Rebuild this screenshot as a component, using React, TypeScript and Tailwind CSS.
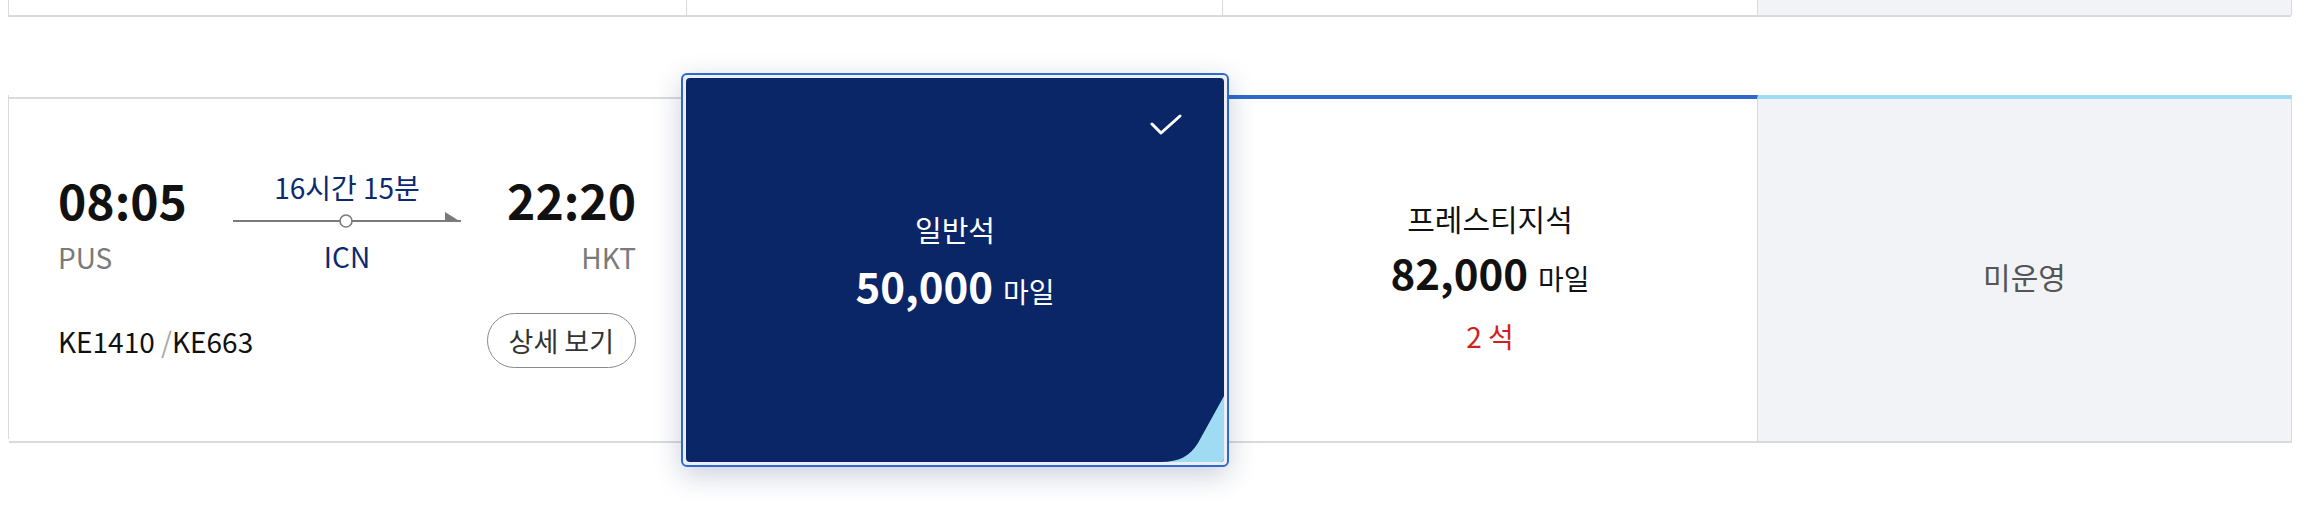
const line = "border-[#d9dae0]";

function FlightInfo() {
  return (
    <div className={`mt-[2px] flex flex-col justify-center border-t-2 border-b-2 border-r ${line} pl-[49px] pr-[50px]`}>
      <div className="flex items-start justify-between">
        <div className="mt-[2px] flex flex-col">
          <span className="text-[48px] font-bold leading-[50px] text-[#111]">08:05</span>
          <span className="mt-[18px] text-[28px] leading-[30px] text-[#7a7a7a]">PUS</span>
        </div>
        <div className="flex w-[228px] flex-col items-center">
          <span className="text-[28px] leading-[30px] text-[#0c2a6e]">16시간 15분</span>
          <svg className="mt-[10px]" width="228" height="16" viewBox="0 0 228 16">
            <rect x="0" y="8" width="228" height="2" fill="#7a7a7a" />
            <polygon points="212,0 228,10 212,10" fill="#7a7a7a" />
            <circle cx="113" cy="9" r="6" fill="#fff" stroke="#7a7a7a" strokeWidth="1.6" />
          </svg>
          <span className="mt-[13px] text-[28px] leading-[30px] text-[#0c2a6e]">ICN</span>
        </div>
        <div className="mt-[2px] flex flex-col items-end">
          <span className="text-[48px] font-bold leading-[50px] text-[#111]">22:20</span>
          <span className="mt-[18px] text-[28px] leading-[30px] text-[#7a7a7a]">HKT</span>
        </div>
      </div>
      <div className="mt-[41px] flex items-center justify-between">
        <span className="text-[28px] leading-[30px] text-[#111]">
          KE1410 <span className="text-[#aaa]">/</span>KE663
        </span>
        <button className="h-[55px] rounded-full border-[1.5px] border-[#8a8a8a] px-[21px] text-[27px] leading-[30px] text-[#333]">
          상세 보기
        </button>
      </div>
    </div>
  );
}

function SelectedFare() {
  return (
    <div className="relative z-10 -mx-[6px] -mt-[24px] -mb-[26px] h-[394px] rounded-[6px] border-2 border-[#2d69cf] bg-[#eceef4] p-[3px] shadow-[0_8px_28px_rgba(15,35,90,0.22)]">
      <div className="relative flex h-full flex-col items-center justify-center overflow-hidden rounded-[4px] bg-[#0b2667] pb-[20px] text-white">
        <svg className="absolute right-[42px] top-[36px]" width="32" height="22" viewBox="0 0 32 22">
          <polyline points="2,10 11,19 30,2" fill="none" stroke="#fff" strokeWidth="3" strokeLinecap="round" strokeLinejoin="round" />
        </svg>
        <span className="text-[29px] leading-[34px]">일반석</span>
        <div className="mt-[16px] flex items-baseline">
          <span className="text-[42px] font-bold leading-[46px]">50,000</span>
          <span className="ml-[10px] text-[28px] leading-[34px]">마일</span>
        </div>
        <svg className="absolute bottom-0 right-0" width="63" height="66" viewBox="0 0 63 66">
          <path d="M63 0 L37 47 C29 60 18 66 0 66 L63 66 Z" fill="#9fdcf3" />
        </svg>
      </div>
    </div>
  );
}

export default function App() {
  return (
    <div className="h-[506px] w-[2314px] bg-white pl-[8px] font-['Noto_Sans_CJK_KR','Noto_Sans',sans-serif]">
      <div className={`grid h-[17px] w-[2283px] grid-cols-[678px_536px_535px_534px] border-b-2 border-l ${line}`}>
        <div className={`border-r ${line}`} />
        <div className={`border-r ${line}`} />
        <div className={`border-r ${line}`} />
        <div className={`border-r ${line} bg-[#f2f3f7]`} />
      </div>

      <div className={`mt-[78px] grid h-[344px] w-[2283px] grid-cols-[678px_536px_535px_534px] border-l ${line}`}>
        <FlightInfo />
        <div className={`border-t-2 border-b-2 ${line}`}>
          <SelectedFare />
        </div>
        <div className={`flex flex-col items-center justify-center border-t-4 border-t-[#2d69cf] border-b-2 border-r ${line} pt-[12px]`}>
          <span className="text-[30px] leading-[34px] text-[#111]">프레스티지석</span>
          <div className="mt-[14px] flex items-baseline text-[#111]">
            <span className="text-[42px] font-bold leading-[46px]">82,000</span>
            <span className="ml-[10px] text-[28px] leading-[34px]">마일</span>
          </div>
          <span className="mt-[26px] text-[28px] leading-[30px] text-[#d0201b]">2 석</span>
        </div>
        <div className={`flex items-center justify-center border-t-4 border-t-[#9fdcf3] border-b-2 border-r ${line} bg-[#f2f3f7] pt-[12px]`}>
          <span className="text-[30px] leading-[34px] text-[#555]">미운영</span>
        </div>
      </div>
    </div>
  );
}
